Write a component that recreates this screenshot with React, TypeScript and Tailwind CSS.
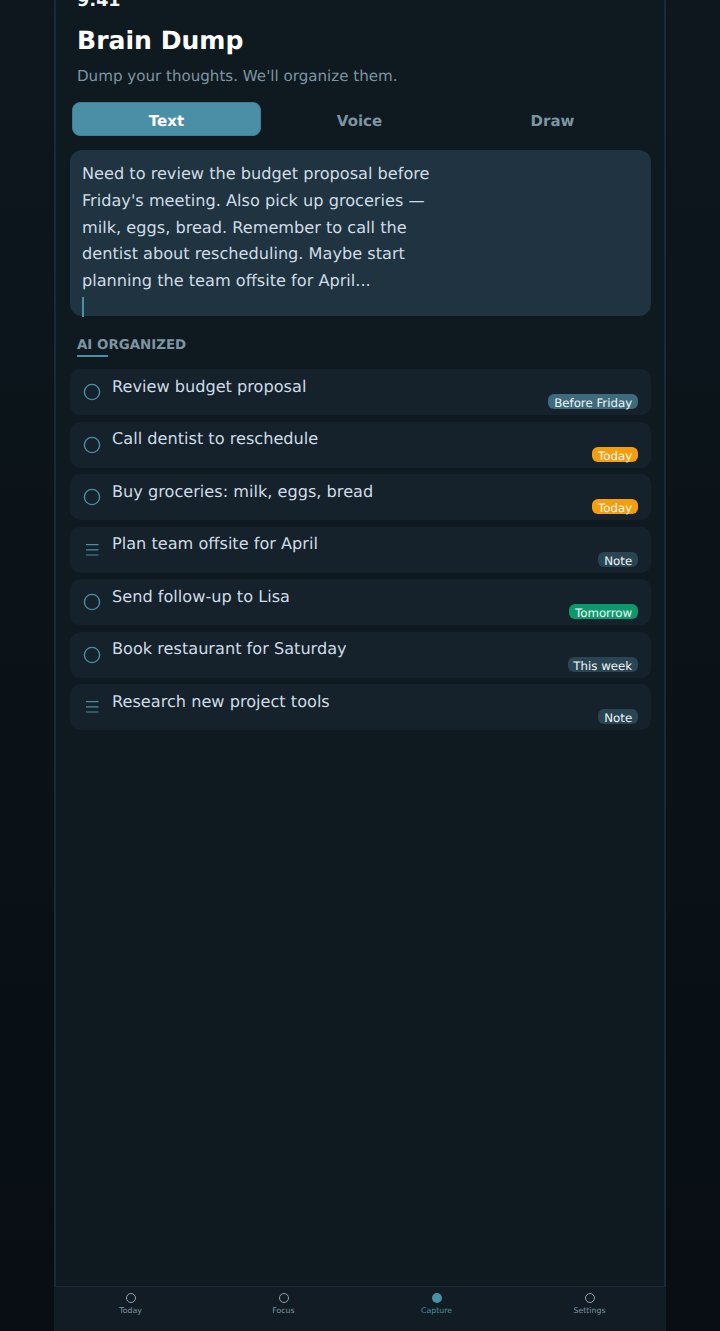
const dump = [
  "Need to review the budget proposal before",
  "Friday's meeting. Also pick up groceries —",
  "milk, eggs, bread. Remember to call the",
  "dentist about rescheduling. Maybe start",
  "planning the team offsite for April...",
];

type Item = { title: string; tag: string; tagClass: string; note?: boolean };

const items: Item[] = [
  { title: "Review budget proposal", tag: "Before Friday", tagClass: "bg-[#3d6b7c]" },
  { title: "Call dentist to reschedule", tag: "Today", tagClass: "bg-[#f59e0b]" },
  { title: "Buy groceries: milk, eggs, bread", tag: "Today", tagClass: "bg-[#f59e0b]" },
  { title: "Plan team offsite for April", tag: "Note", tagClass: "bg-[#2a4552]", note: true },
  { title: "Send follow-up to Lisa", tag: "Tomorrow", tagClass: "bg-[#0c9a6c]" },
  { title: "Book restaurant for Saturday", tag: "This week", tagClass: "bg-[#2a4552]" },
  { title: "Research new project tools", tag: "Note", tagClass: "bg-[#2a4552]", note: true },
];

const navItems = [
  { label: "Today", active: false },
  { label: "Focus", active: false },
  { label: "Capture", active: true },
  { label: "Settings", active: false },
];

function ItemIcon({ note }: { note?: boolean }) {
  return (
    <svg width="18" height="18" viewBox="0 0 18 18" fill="none" stroke="#4a90a4">
      {note ? (
        <path d="M3 3.6h12.5M3 8.8h12.5M3 14h12.5" strokeWidth="1.2" />
      ) : (
        <circle cx="9" cy="9" r="7.6" strokeWidth="1.4" />
      )}
    </svg>
  );
}

function ItemRow({ item }: { item: Item }) {
  return (
    <div className="flex h-[46px] rounded-[10px] bg-[#15212b] pl-[13px] pr-[13px]">
      <div className="w-[29px] shrink-0 pt-[14px]">
        <ItemIcon note={item.note} />
      </div>
      <div className="flex min-w-0 flex-1 flex-col">
        <div className="mt-[5.5px] text-[16.15px] leading-[24px] text-[#cfdce5]">{item.title}</div>
        <div className="flex justify-end">
          <span
            className={`mt-[-4.5px] h-[15px] rounded-[6px] px-[5.8px] text-[11.8px] leading-[18px] text-[#f0f5f8] ${item.tagClass}`}
          >
            {item.tag}
          </span>
        </div>
      </div>
    </div>
  );
}

export default function App() {
  return (
    <div className="h-[1331px] overflow-hidden bg-gradient-to-b from-[#0d171d] to-[#080e13] font-['DejaVu_Sans',sans-serif] [text-rendering:geometricPrecision]">
      <div className="mx-auto flex h-full w-[612px] flex-col border-x-2 border-[#1a2a35] bg-[#0f1a20]">
        <div className="min-h-0 flex-1">
          <div className="mt-[-8px] pl-[21px] text-[17.5px] font-bold leading-[18px] text-[#f4f7f9]">9:41</div>
          <h1 className="mt-[15px] pl-[21px] text-[25.1px] font-bold leading-[32px] text-white">Brain Dump</h1>
          <p className="mt-[7px] pl-[21px] text-[15.1px] leading-[24px] text-[#7d95a3]">
            Dump your thoughts. We'll organize them.
          </p>
          <div className="mt-[14px] flex gap-[4px] pl-[16px]">
            <div className="flex h-[34px] w-[189px] items-center justify-center rounded-[8px] border border-[#3f7f94] bg-[#4a8fa5] pt-[4px] text-[15px] font-bold text-white">
              Text
            </div>
            <div className="flex h-[34px] w-[189px] items-center justify-center pt-[4px] text-[15px] font-bold text-[#7d95a3]">
              Voice
            </div>
            <div className="flex h-[34px] w-[189px] items-center justify-center pt-[4px] text-[15px] font-bold text-[#7d95a3]">
              Draw
            </div>
          </div>
          <div className="ml-[14px] mr-[13px] mt-[14px] h-[166px] rounded-[12px] bg-[#1f3340] px-[12px] pt-[11px]">
            {dump.map((line) => (
              <div key={line} className="text-[16.15px] leading-[26.8px] text-[#cfdce5]">
                {line}
              </div>
            ))}
            <div className="mt-[2px] h-[20px] w-[2px] bg-[#4a90a4]" />
          </div>
          <div className="ml-[21px] mt-[21px] text-[13.4px] font-bold leading-[18px] text-[#7d95a3]">
            AI ORGANIZED
          </div>
          <div className="ml-[21px] h-[2px] w-[31px] bg-[#4a90a4]" />
          <div className="ml-[14px] mr-[13px] mt-[12px] flex flex-col gap-[6.5px]">
            {items.map((item) => (
              <ItemRow key={item.title} item={item} />
            ))}
          </div>
        </div>
        <nav className="mx-[-2px] flex h-[45px] shrink-0 border-t border-[#1a2a35] bg-[#111c24]">
          {navItems.map((nav) => (
            <div key={nav.label} className="flex flex-1 flex-col items-center pt-[6px]">
              <div
                className={
                  nav.active
                    ? "h-[10px] w-[10px] rounded-full bg-[#4a90a4]"
                    : "h-[10px] w-[10px] rounded-full border border-[#8fa3af]"
                }
              />
              <span
                className={
                  nav.active
                    ? "mt-[2px] text-[7.8px] leading-[12px] text-[#4a90a4]"
                    : "mt-[2px] text-[7.8px] leading-[12px] text-[#7d95a3]"
                }
              >
                {nav.label}
              </span>
            </div>
          ))}
        </nav>
      </div>
    </div>
  );
}
